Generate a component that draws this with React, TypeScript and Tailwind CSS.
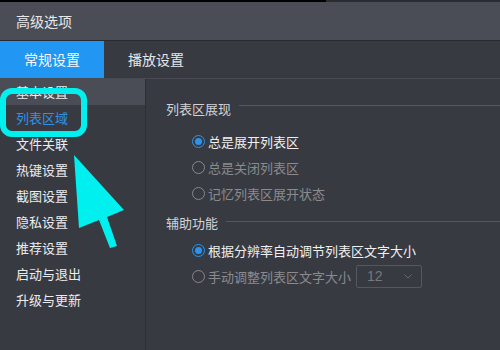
import React from "react";

const font = { fontFamily: '"Noto Sans CJK SC", "Noto Sans", sans-serif' };

function Radio({ checked, label }: { checked?: boolean; label: string }) {
  return (
    <div className="flex h-[26px] items-center pl-[46px]">
      <span
        className={
          checked
            ? "flex h-[13px] w-[13px] items-center justify-center rounded-full border-[1.5px] border-[#2b93f0]"
            : "flex h-[13px] w-[13px] items-center justify-center rounded-full border-[1.5px] border-[#86888d]"
        }
      >
        {checked && <span className="h-[7px] w-[7px] rounded-full bg-[#2b93f0]" />}
      </span>
      <span className={checked ? "ml-[3px] text-[13px] leading-none text-[#f0f0f0]" : "ml-[3px] text-[13px] leading-none text-[#8a8b8f]"}>
        {label}
      </span>
    </div>
  );
}

function Heading({ label, lineOffset }: { label: string; lineOffset: string }) {
  return (
    <div className="flex h-[18px] items-start pl-[20px]">
      <span className="text-[13px] leading-[18px] text-[#d2d3d6]">{label}</span>
      <div className={`ml-[8px] h-px flex-1 bg-[#55575e] ${lineOffset}`} />
    </div>
  );
}

export default function App() {
  const items = ["基本设置", "列表区域", "文件关联", "热键设置", "截图设置", "隐私设置", "推荐设置", "启动与退出", "升级与更新"];
  return (
    <div className="relative flex h-[350px] w-[500px] flex-col overflow-hidden bg-[#383a42]" style={font}>
      <div className="flex h-[2px]">
        <div className="w-[326px] bg-black" />
        <div className="flex-1 bg-[#2b2c31]" />
      </div>
      <div className="flex h-[38px] items-center bg-[#4a4d55] pl-[16px] text-[14px] text-[#e8e8ea]">高级选项</div>
      <div className="h-px bg-[#2a2b30]" />
      <div className="flex h-[37px] bg-[#383a42] text-[14px]">
        <div className="flex w-[104px] items-center justify-center bg-[#2196f3] text-[#f4f8ff]">常规设置</div>
        <div className="flex items-center pl-[24px] text-[#e6e6e8]">播放设置</div>
      </div>
      <div className="h-px bg-[#484a52]" />
      <div className="flex flex-1">
        <div className="w-[146px] border-r border-[#2d2f35] bg-[#383a42]">
          {items.map((it, i) => (
            <div
              key={it}
              className={
                i === 0
                  ? "flex h-[26px] items-center bg-[#4a4d55] pl-[16px] text-[13px] text-[#ececee]"
                  : i === 1
                  ? "flex h-[26px] items-center pl-[16px] text-[13px] text-[#3191ea]"
                  : "flex h-[26px] items-center pl-[16px] text-[13px] text-[#ececee]"
              }
            >
              {it}
            </div>
          ))}
        </div>
        <div className="flex flex-1 flex-col bg-[#383a42] pt-[21px]">
          <Heading label="列表区展现" lineOffset="mt-[5px]" />
          <div className="mt-[10px]">
            <Radio checked label="总是展开列表区" />
            <Radio label="总是关闭列表区" />
            <Radio label="记忆列表区展开状态" />
          </div>
          <div className="mt-[8px]">
            <Heading label="辅助功能" lineOffset="mt-[7px]" />
          </div>
          <div className="mt-[5px]">
            <Radio checked label="根据分辨率自动调节列表区文字大小" />
            <div className="flex h-[26px] items-center pl-[46px]">
              <span className="h-[13px] w-[13px] rounded-full border-[1.5px] border-[#86888d]" />
              <span className="ml-[3px] text-[13px] leading-none text-[#8a8b8f]">手动调整列表区文字大小</span>
              <div className="ml-[5px] flex h-[23px] w-[66px] items-center justify-between rounded-[2px] border border-[#55575e] pl-[10px] pr-[9px]">
                <span className="text-[14px] leading-none text-[#76787d]" style={{ fontFamily: '"Liberation Sans", sans-serif' }}>12</span>
                <svg width="8" height="5" viewBox="0 0 8 5">
                  <path d="M0.5 0.5 L4 4 L7.5 0.5" fill="none" stroke="#66686d" strokeWidth="1" />
                </svg>
              </div>
            </div>
          </div>
        </div>
      </div>
      <svg className="pointer-events-none absolute left-0 top-0" width="500" height="350" viewBox="0 0 500 350">
        <rect x="3" y="91" width="81" height="43" rx="9" fill="none" stroke="#00f0f0" strokeWidth="6" />
        <polygon points="74,155 124,210 107,217 117,246 110,248 99,220 79,228" fill="#00f0f0" />
      </svg>
    </div>
  );
}
